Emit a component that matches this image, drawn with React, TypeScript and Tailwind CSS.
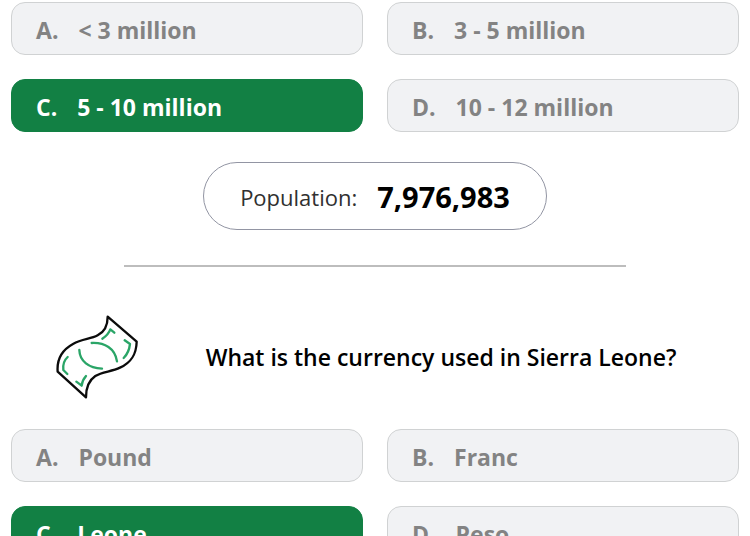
import clsx from 'clsx';

type Option = { letter: string; label: string; correct?: boolean };

const populationOptions: Option[] = [
  { letter: 'A', label: '< 3 million' },
  { letter: 'B', label: '3 - 5 million' },
  { letter: 'C', label: '5 - 10 million', correct: true },
  { letter: 'D', label: '10 - 12 million' },
];

const currencyOptions: Option[] = [
  { letter: 'A', label: 'Pound' },
  { letter: 'B', label: 'Franc' },
  { letter: 'C', label: 'Leone', correct: true },
  { letter: 'D', label: 'Peso' },
];

function OptionGrid({ options }: { options: Option[] }) {
  return (
    <div className="grid grid-cols-2 gap-6">
      {options.map((option) => (
        <button
          key={option.letter}
          type="button"
          className={clsx(
            'flex items-center gap-5 rounded-[14px] border px-6 pt-3 pb-2 text-left text-[23px] leading-[31px] font-bold',
            option.correct
              ? 'border-[#128044] bg-[#128044] text-white'
              : 'border-[#d0d2d3] bg-[#f1f2f4] text-[#838383]'
          )}
        >
          <span>{option.letter}.</span>
          <span>{option.label}</span>
        </button>
      ))}
    </div>
  );
}

function BanknoteIcon() {
  return (
    <svg
      className="size-[84px] shrink-0"
      viewBox="45 45 252 252"
      fill="none"
      strokeLinecap="round"
      strokeLinejoin="round"
      aria-hidden="true"
    >
      <path
        d="M203 50L290 125C289 164 274 187 240 203C214 216 187 214 166 228C145 242 138 264 138 292L53 215C50 177 68 149 99 132C127 116 151 118 173 106C194 95 203 76 203 50Z"
        stroke="#0b0b0b"
        strokeWidth="7"
      />
      <g stroke="#2aa567" strokeWidth="7">
        <path d="M155 129C194 127 225 145 231 184" />
        <path d="M118 150C119 184 147 204 186 206" />
        <path d="M187 116C199 108 207 99 211 88L223 98" />
        <path d="M254 121L270 132C268 149 263 162 251 174" />
        <path d="M83 171C72 181 68 193 70 210L82 222" />
        <path d="M109 245L125 257C126 246 130 237 138 228" />
      </g>
    </svg>
  );
}

export default function App() {
  return (
    <main className="h-screen overflow-hidden bg-white px-[11px] pt-0.5 font-['Open_Sans','Noto_Sans',sans-serif] text-black">
      <OptionGrid options={populationOptions} />

      <div className="mx-auto mt-[30px] flex w-fit items-center gap-5 rounded-full border border-[#9295a3] px-9 pt-4 pb-3.5 leading-9">
        <span className="text-[22px] text-[#303030]">Population:</span>
        <strong className="text-[29px] font-bold">7,976,983</strong>
      </div>

      <hr className="mx-auto mt-[35px] w-[69%] border-t-2 border-[#bdbdbd]" />

      <div className="mt-12 mb-[30px] flex items-center pl-11">
        <BanknoteIcon />
        <h2 className="flex-1 pl-1 text-center text-[23px] leading-8 font-semibold">
          What is the currency used in Sierra Leone?
        </h2>
      </div>

      <OptionGrid options={currencyOptions} />
    </main>
  );
}
